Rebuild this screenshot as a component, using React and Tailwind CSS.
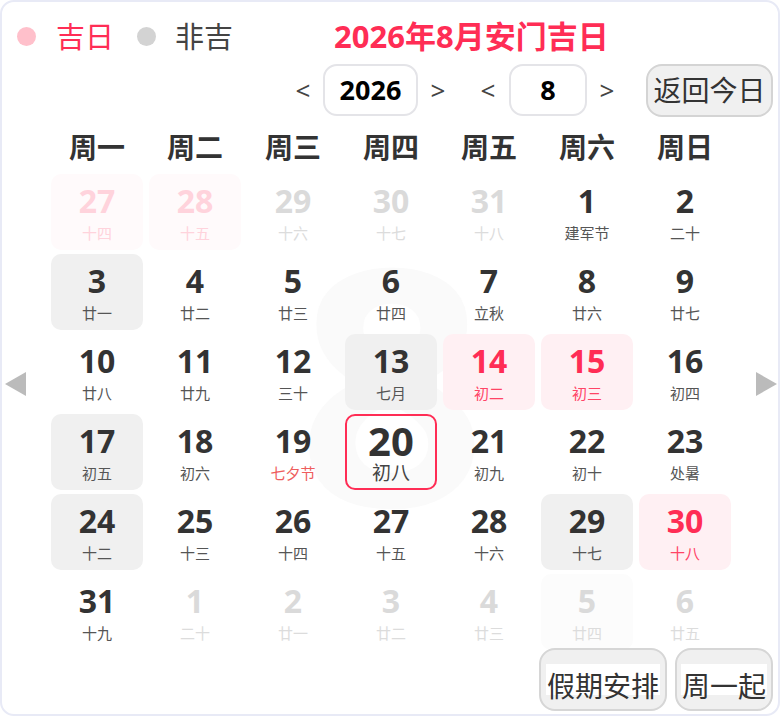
import React from "react";

const RED = "text-[#ff2d55]";

const days = [
  { n: 27, l: "十四", kind: "prevLucky" },
  { n: 28, l: "十五", kind: "prevLucky" },
  { n: 29, l: "十六", kind: "other" },
  { n: 30, l: "十七", kind: "other" },
  { n: 31, l: "十八", kind: "other" },
  { n: 1, l: "建军节" },
  { n: 2, l: "二十" },
  { n: 3, l: "廿一", kind: "gray" },
  { n: 4, l: "廿二" },
  { n: 5, l: "廿三" },
  { n: 6, l: "廿四" },
  { n: 7, l: "立秋" },
  { n: 8, l: "廿六" },
  { n: 9, l: "廿七" },
  { n: 10, l: "廿八" },
  { n: 11, l: "廿九" },
  { n: 12, l: "三十" },
  { n: 13, l: "七月", kind: "gray" },
  { n: 14, l: "初二", kind: "lucky" },
  { n: 15, l: "初三", kind: "lucky" },
  { n: 16, l: "初四" },
  { n: 17, l: "初五", kind: "gray" },
  { n: 18, l: "初六" },
  { n: 19, l: "七夕节", kind: "festival" },
  { n: 20, l: "初八", kind: "today" },
  { n: 21, l: "初九" },
  { n: 22, l: "初十" },
  { n: 23, l: "处暑" },
  { n: 24, l: "十二", kind: "gray" },
  { n: 25, l: "十三" },
  { n: 26, l: "十四" },
  { n: 27, l: "十五" },
  { n: 28, l: "十六" },
  { n: 29, l: "十七", kind: "gray" },
  { n: 30, l: "十八", kind: "lucky" },
  { n: 31, l: "十九" },
  { n: 1, l: "二十", kind: "other" },
  { n: 2, l: "廿一", kind: "other" },
  { n: 3, l: "廿二", kind: "other" },
  { n: 4, l: "廿三", kind: "other" },
  { n: 5, l: "廿四", kind: "nextGray" },
  { n: 6, l: "廿五", kind: "other" },
];

const weekdays = ["周一", "周二", "周三", "周四", "周五", "周六", "周日"];

function DayCell({ d }) {
  let box = "border-transparent";
  let num = "text-[#333]";
  let lunar = "text-[#555]";
  if (d.kind === "gray") box = "border-transparent bg-[#f0f0f0]";
  if (d.kind === "nextGray") {
    box = "border-transparent bg-[#fcfcfc]";
    num = "text-[#dadada]";
    lunar = "text-[#dcdcdc]";
  }
  if (d.kind === "lucky") {
    box = "border-transparent bg-[#fff0f3]";
    num = RED;
    lunar = "text-[#ff4466]";
  }
  if (d.kind === "prevLucky") {
    box = "border-transparent bg-[#fffafb]";
    num = "text-[#ffd3dc]";
    lunar = "text-[#ffd3dc]";
  }
  if (d.kind === "other") {
    num = "text-[#dadada]";
    lunar = "text-[#dcdcdc]";
  }
  if (d.kind === "festival") lunar = "text-[#ee5d5d]";

  if (d.kind === "today") {
    return (
      <div className="h-[76px] rounded-[10px] border-2 border-[#ff2d55] flex flex-col items-center">
        <span className="mt-[3px] text-[40px] leading-[44px] font-bold text-[#333]">{d.n}</span>
        <span className="-mt-[1px] text-[19px] leading-[22px] text-[#444]">{d.l}</span>
      </div>
    );
  }

  return (
    <div className={`h-[76px] rounded-[10px] border-2 flex flex-col items-center ${box}`}>
      <span className={`mt-[7px] text-[32px] leading-[36px] font-bold ${num}`}>{d.n}</span>
      <span className={`mt-[4px] text-[15px] leading-[20px] ${lunar}`}>{d.l}</span>
    </div>
  );
}

export default function App() {
  return (
    <div
      className="relative w-[780px] h-[716px] bg-white border-2 border-[#e8eaf6] rounded-[14px] overflow-hidden"
      style={{ fontFamily: '"Noto Sans", "Noto Sans CJK SC", sans-serif' }}
    >
      {/* watermark month */}
      <div className="absolute left-[4px] right-0 top-[186px] flex justify-center pointer-events-none">
        <span className="text-[330px] leading-[380px] font-bold text-[#fafafa]">8</span>
      </div>

      <div className="relative">
        {/* legend + title */}
        <div className="flex items-center h-[48px] mt-[10px] pl-[15px]">
          <span className="w-[19px] h-[19px] rounded-full bg-[#ffc0cb]" />
          <span className={`ml-[20px] text-[29px] leading-none ${RED}`}>吉日</span>
          <span className="ml-[23px] w-[19px] h-[19px] rounded-full bg-[#d3d3d3]" />
          <span className="ml-[19px] text-[29px] leading-none text-[#444]">非吉</span>
          <span className={`ml-[101px] text-[31px] leading-none font-bold ${RED}`}>2026年8月安门吉日</span>
        </div>

        {/* selectors */}
        <div className="flex items-center justify-end h-[52px] mt-[4px] pr-[5px]">
          <span className="w-[30px] text-center text-[26px] text-[#444]">&lt;</span>
          <div className="ml-[5px] w-[95px] h-[52px] rounded-[14px] border-2 border-[#e4e4e8] flex items-center justify-center text-[27px] font-bold text-black">
            2026
          </div>
          <span className="ml-[5px] w-[30px] text-center text-[26px] text-[#444]">&gt;</span>
          <span className="ml-[20px] w-[30px] text-center text-[26px] text-[#444]">&lt;</span>
          <div className="ml-[6px] w-[78px] h-[52px] rounded-[14px] border-2 border-[#e4e4e8] flex items-center justify-center text-[27px] font-bold text-black">
            8
          </div>
          <span className="ml-[5px] w-[30px] text-center text-[26px] text-[#444]">&gt;</span>
          <button className="ml-[24px] w-[127px] h-[53px] rounded-[16px] border-2 border-[#d4d4d4] bg-[#f0f0f0] text-[28px] text-[#333] flex items-center justify-center">
            返回今日
          </button>
        </div>

        {/* weekdays */}
        <div className="grid grid-cols-7 gap-x-[6px] h-[54px] mt-[4px] pl-[49px] w-[729px] items-center">
          {weekdays.map((w) => (
            <div key={w} className="text-center text-[28px] font-bold text-[#333]">
              {w}
            </div>
          ))}
        </div>

        {/* days */}
        <div className="grid grid-cols-7 gap-x-[6px] gap-y-[4px] pl-[49px] w-[729px]">
          {days.map((d, i) => (
            <DayCell key={i} d={d} />
          ))}
        </div>

        {/* bottom buttons */}
        <div className="flex justify-end gap-[8px] pr-[5px] -mt-[2px]">
          <button className="w-[128px] h-[63px] rounded-[16px] border-2 border-[#d6d6d6] bg-[#f0f0f0] text-[28px] text-[#333] flex justify-center pt-[14px]">
            <span className="inline-block bg-white h-[31px] leading-[44px] px-[1px]">假期安排</span>
          </button>
          <button className="w-[98px] h-[63px] rounded-[16px] border-2 border-[#d6d6d6] bg-[#f0f0f0] text-[28px] text-[#333] flex justify-center pt-[14px]">
            <span className="inline-block bg-white h-[31px] leading-[44px] px-[1px]">周一起</span>
          </button>
        </div>
      </div>

      {/* side arrows */}
      <div className="absolute left-[3px] top-[370px] w-0 h-0 border-y-[12px] border-y-transparent border-r-[21px] border-r-[#bbbbbb]" />
      <div className="absolute right-[1px] top-[370px] w-0 h-0 border-y-[12px] border-y-transparent border-l-[21px] border-l-[#bbbbbb]" />
    </div>
  );
}
